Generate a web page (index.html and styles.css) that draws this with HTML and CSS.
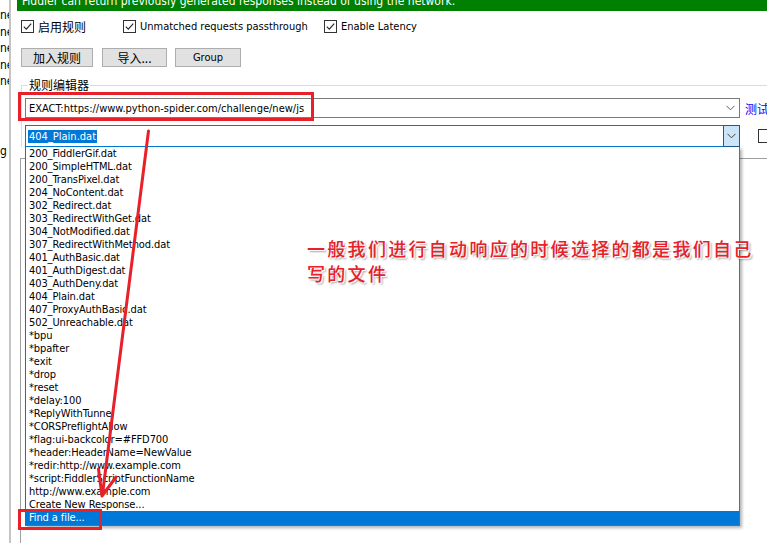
FILE: index.html
```html
<!DOCTYPE html>
<html>
<head>
<meta charset="utf-8">
<link rel="stylesheet" href="styles.css">
</head>
<body>
<div class="app">
  <div class="side">
    <span class="frag">ne</span>
    <span class="frag">ne</span>
    <span class="frag">ne</span>
    <span class="frag">ne</span>
    <span class="frag">ne</span>
    <span class="frag g">g</span>
  </div>
  <div class="main">
    <div class="banner"><span>Fiddler can return previously generated responses instead of using the network.</span></div>
    <div class="opts">
      <label class="chk w1"><span class="box"><svg width="11" height="11" viewBox="0 0 11 11"><path d="M1.8 5.6 L4.3 8.1 L9.2 2.6" fill="none" stroke="#222" stroke-width="1.1"/></svg></span><span class="cjk">启用规则</span></label>
      <label class="chk w2"><span class="box"><svg width="11" height="11" viewBox="0 0 11 11"><path d="M1.8 5.6 L4.3 8.1 L9.2 2.6" fill="none" stroke="#222" stroke-width="1.1"/></svg></span><span>Unmatched requests passthrough</span></label>
      <label class="chk"><span class="box"><svg width="11" height="11" viewBox="0 0 11 11"><path d="M1.8 5.6 L4.3 8.1 L9.2 2.6" fill="none" stroke="#222" stroke-width="1.1"/></svg></span><span>Enable Latency</span></label>
    </div>
    <div class="btns">
      <div class="btn b1 cjk">加入规则</div>
      <div class="btn b2 cjk">导入...</div>
      <div class="btn b3">Group</div>
    </div>
    <fieldset class="group">
      <legend class="cjk">规则编辑器</legend>
      <div class="row1">
        <div class="combo">
          <span class="ctext">EXACT:https://www.python-spider.com/challenge/new/js</span>
          <svg class="chev" width="9" height="6" viewBox="0 0 9 6"><path d="M0.5 0.8 L4.5 4.8 L8.5 0.8" fill="none" stroke="#606060" stroke-width="1"/></svg>
        </div>
        <span class="test cjk">测试</span>
      </div>
      <div class="row2">
        <div class="combo open">
          <span class="sel">404_Plain.dat</span>
          <span class="dbtn"><svg width="9" height="6" viewBox="0 0 9 6"><path d="M0.5 0.8 L4.5 4.8 L8.5 0.8" fill="none" stroke="#404040" stroke-width="1"/></svg></span>
        </div>
        <span class="box empty"></span>
      </div>
    </fieldset>
    <div class="panel"></div>
  </div>

  <ul class="dropdown">
    <li>200_FiddlerGif.dat</li>
    <li>200_SimpleHTML.dat</li>
    <li>200_TransPixel.dat</li>
    <li>204_NoContent.dat</li>
    <li>302_Redirect.dat</li>
    <li>303_RedirectWithGet.dat</li>
    <li>304_NotModified.dat</li>
    <li>307_RedirectWithMethod.dat</li>
    <li>401_AuthBasic.dat</li>
    <li>401_AuthDigest.dat</li>
    <li>403_AuthDeny.dat</li>
    <li>404_Plain.dat</li>
    <li>407_ProxyAuthBasic.dat</li>
    <li>502_Unreachable.dat</li>
    <li>*bpu</li>
    <li>*bpafter</li>
    <li>*exit</li>
    <li>*drop</li>
    <li>*reset</li>
    <li>*delay:100</li>
    <li>*ReplyWithTunnel</li>
    <li>*CORSPreflightAllow</li>
    <li>*flag:ui-backcolor=#FFD700</li>
    <li>*header:HeaderName=NewValue</li>
    <li>*redir:http://www.example.com</li>
    <li>*script:FiddlerScriptFunctionName</li>
    <li>http://www.example.com</li>
    <li>Create New Response...</li>
    <li class="hl">Find a file...</li>
  </ul>

  <div class="mark mark1"></div>
  <div class="mark mark2"></div>
  <svg class="arrow" width="767" height="543" viewBox="0 0 767 543">
    <line x1="148.5" y1="131" x2="102.5" y2="494" stroke="#e8202a" stroke-width="3" stroke-linecap="round"/>
    <polyline points="98.5,469 102,496 116,477" fill="none" stroke="#e8202a" stroke-width="3" stroke-linecap="round" stroke-linejoin="round"/>
  </svg>
  <div class="note cjk">一般我们进行自动响应的时候选择的都是我们自己<br>写的文件</div>
</div>
</body>
</html>
```

FILE: styles.css
```css
html, body {
  margin: 0;
  padding: 0;
  background: #ffffff;
}
body {
  font-family: "DejaVu Sans Condensed", Tahoma, "Liberation Sans", "Noto Sans CJK SC", sans-serif;
  font-size: 11px;
  color: #000;
}
.cjk {
  font-family: "Noto Sans CJK SC", "Microsoft YaHei", sans-serif;
  font-size: 12px;
}
.app {
  position: relative;
  display: flex;
  width: 767px;
  height: 543px;
  overflow: hidden;
}
.side {
  flex: none;
  width: 9px;
  border-right: 2px solid #c4c4c4;
  overflow: hidden;
  padding-top: 7px;
}
.frag {
  display: block;
  height: 16.6px;
  line-height: 16.6px;
  white-space: nowrap;
  font-size: 12px;
}
.frag.g {
  margin-top: 53px;
}
.main {
  flex: 1;
  min-width: 0;
  margin-left: 6px;
}
.banner {
  height: 11px;
  background: #008000;
  color: #fff;
  overflow: hidden;
  padding-left: 5px;
  font-size: 12px;
}
.banner span {
  display: block;
  line-height: 14px;
  margin-top: -6px;
  white-space: nowrap;
}
.opts {
  display: flex;
  align-items: center;
  height: 13px;
  margin-top: 9px;
  padding-left: 4px;
}
.chk {
  display: flex;
  align-items: center;
  gap: 4px;
  white-space: nowrap;
}
.chk.w1 { width: 102px; }
.chk.w2 { width: 201px; }
.box {
  display: block;
  flex: none;
  width: 11px;
  height: 11px;
  border: 1px solid #333;
  background: #fff;
}
.box svg { display: block; }
.btns {
  display: flex;
  margin-top: 15px;
  padding-left: 4px;
}
.btn {
  box-sizing: border-box;
  height: 19px;
  border: 1px solid #adadad;
  background: #e1e1e1;
  display: flex;
  align-items: center;
  justify-content: center;
  line-height: 1;
}
.b1 { width: 72px; margin-right: 9px; }
.b2 { width: 65px; margin-right: 8px; }
.b3 { width: 66px; }
.group {
  margin: 11px 0 0 4px;
  padding: 0 0 0 3px;
  border: none;
  border-top: 1px solid #dcdcdc;
  border-left: 1px solid #dcdcdc;
  min-width: 0;
}
.group legend {
  padding: 0 1px;
  margin-left: 3px;
  line-height: 14px;
  color: #000;
}
.row1 {
  display: flex;
  align-items: center;
  margin-top: 6px;
}
.combo {
  flex: none;
  box-sizing: border-box;
  width: 715px;
  height: 20px;
  border: 1px solid #7a7a7a;
  display: flex;
  align-items: center;
  padding-left: 3px;
  background: #fff;
}
.ctext { white-space: nowrap; }
.chev {
  margin-left: auto;
  margin-right: 4px;
}
.test {
  margin-left: 5px;
  color: #0000ff;
  white-space: nowrap;
}
.row2 {
  display: flex;
  align-items: center;
  margin-top: 7px;
}
.combo.open {
  height: 22px;
  border-color: #0078d7;
  padding-left: 2px;
}
.sel {
  background: #0078d7;
  color: #fff;
  line-height: 13px;
  padding: 0 1px;
}
.dbtn {
  box-sizing: border-box;
  margin: -1px -1px -1px auto;
  width: 17px;
  height: 22px;
  border: 1px solid #1e5a8a;
  background: #cce4f7;
  display: flex;
  align-items: center;
  justify-content: center;
}
.dbtn svg { display: block; }
.box.empty {
  margin-left: 18px;
  width: 12px;
  height: 12px;
}
.panel {
  margin: 11px 0 0 3px;
  height: 400px;
  border-top: 1px solid #a0a0a0;
  border-left: 1px solid #a0a0a0;
}
.dropdown {
  position: absolute;
  left: 25px;
  top: 147px;
  width: 715px;
  box-sizing: border-box;
  margin: 0;
  padding: 0;
  list-style: none;
  background: #fff;
  border-left: 1px solid #0078d7;
  border-right: 1px solid #5a6f86;
  border-bottom: 1px solid #5a6f86;
  box-shadow: 2px 2px 3px rgba(0, 0, 0, 0.3);
}
.dropdown li {
  height: 13px;
  line-height: 13px;
  padding-left: 3px;
  white-space: nowrap;
  letter-spacing: -0.1px;
}
.dropdown li.hl {
  background: #0078d7;
  color: #fff;
  height: 14px;
  line-height: 14px;
}
.mark {
  position: absolute;
  box-sizing: border-box;
  border: 3px solid #e8202a;
}
.mark1 {
  left: 18px;
  top: 92px;
  width: 296px;
  height: 29px;
}
.mark2 {
  left: 18px;
  top: 509px;
  width: 84px;
  height: 21px;
}
.arrow {
  position: absolute;
  left: 0;
  top: 0;
  pointer-events: none;
}
.note {
  position: absolute;
  left: 307px;
  top: 236px;
  font-size: 18px;
  font-weight: 500;
  letter-spacing: 2.3px;
  line-height: 25px;
  color: #e8202a;
  white-space: nowrap;
  text-shadow: 1px 1px 0 #fff, 2px 2px 2px rgba(0, 0, 0, 0.35);
}
```
